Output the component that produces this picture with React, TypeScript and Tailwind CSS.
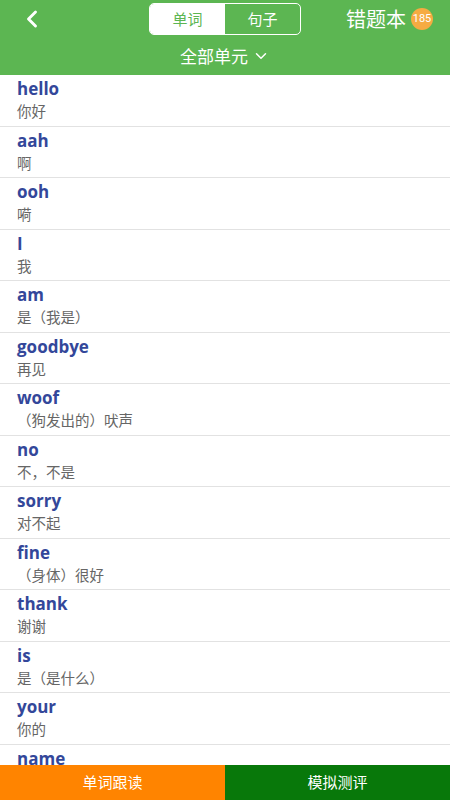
import { ChevronLeft, ChevronDown } from "lucide-react";

const words = [
  { en: "hello", zh: "你好" },
  { en: "aah", zh: "啊" },
  { en: "ooh", zh: "嗬" },
  { en: "I", zh: "我" },
  { en: "am", zh: "是（我是）" },
  { en: "goodbye", zh: "再见" },
  { en: "woof", zh: "（狗发出的）吠声" },
  { en: "no", zh: "不，不是" },
  { en: "sorry", zh: "对不起" },
  { en: "fine", zh: "（身体）很好" },
  { en: "thank", zh: "谢谢" },
  { en: "is", zh: "是（是什么）" },
  { en: "your", zh: "你的" },
  { en: "name", zh: "名字" },
];

const cjk = { fontFamily: '"Noto Sans CJK SC", "Noto Sans", sans-serif' };

export default function App() {
  return (
    <div className="w-[450px] h-[800px] flex flex-col bg-white overflow-hidden" style={cjk}>
      {/* Header */}
      <div className="h-[75px] bg-[#5cb652] flex flex-col shrink-0">
        <div className="h-[38px] flex items-center px-[18px] relative">
          <ChevronLeft className="w-[28px] h-[28px] text-white" strokeWidth={2.5} />
          <div className="absolute left-[149px] top-[3px] w-[152px] h-[32px] border-[1.5px] border-white rounded-[5px] flex overflow-hidden">
            <div className="flex-1 bg-white text-[#5cb652] text-[15px] flex items-center justify-center">单词</div>
            <div className="flex-1 text-white text-[15px] flex items-center justify-center">句子</div>
          </div>
          <div className="ml-auto flex items-center gap-[5px] mr-[-1px]">
            <span className="text-white text-[20px]">错题本</span>
            <span className="w-[22px] h-[22px] rounded-full bg-[#f6ab42] text-white text-[11px] flex items-center justify-center" style={{ fontFamily: "Roboto, sans-serif" }}>185</span>
          </div>
        </div>
        <div className="flex-1 flex items-center justify-center gap-[4px] text-white text-[17px] pb-[2px]">
          <span>全部单元</span>
          <ChevronDown className="w-[18px] h-[18px]" strokeWidth={2} />
        </div>
      </div>

      {/* List */}
      <div className="flex-1 overflow-hidden">
        {words.map((w) => (
          <div key={w.en} className="h-[51.5px] border-b border-[#e2e2e2] px-[17px] flex flex-col justify-center">
            <div className="text-[17px] font-bold text-[#33479a] leading-[22px]" style={{ fontFamily: '"Open Sans", sans-serif' }}>{w.en}</div>
            <div className="text-[14.5px] text-[#666666] leading-[22px]">{w.zh}</div>
          </div>
        ))}
      </div>

      {/* Bottom bar */}
      <div className="h-[35px] flex shrink-0 text-white text-[15px]">
        <div className="flex-1 bg-[#ff8400] flex items-center justify-center">单词跟读</div>
        <div className="flex-1 bg-[#08780a] flex items-center justify-center">模拟测评</div>
      </div>
    </div>
  );
}
